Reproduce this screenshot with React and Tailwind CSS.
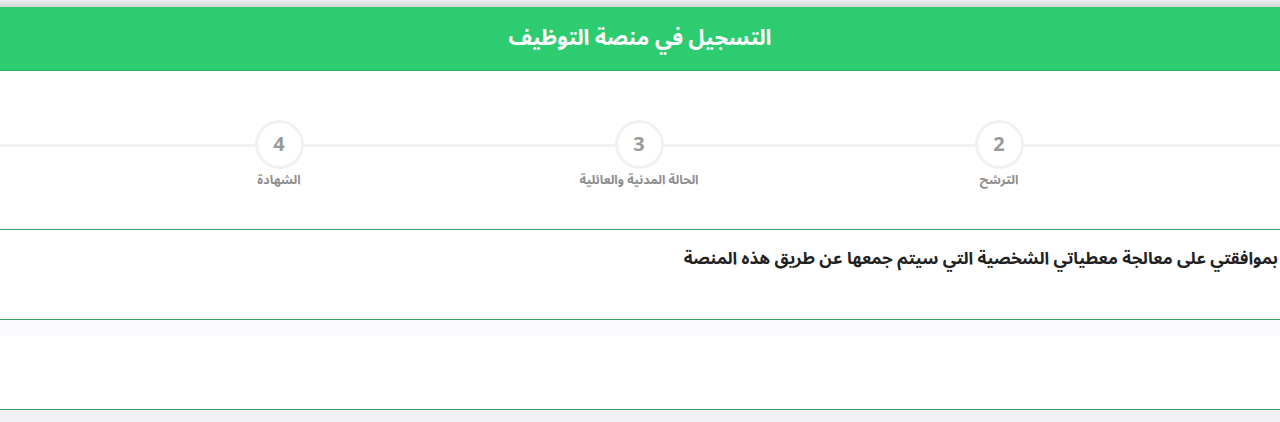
export default function App() {
  const steps = [
    { n: "4", label: "الشهادة" },
    { n: "3", label: "الحالة المدنية والعائلية" },
    { n: "2", label: "الترشح" },
  ];
  return (
    <div className="w-[1280px] h-[422px] overflow-hidden bg-white" style={{ fontFamily: '"Noto Sans Arabic","DejaVu Sans","Noto Sans",sans-serif' }}>
      <div className="h-[7px] bg-gradient-to-b from-[#ececec] to-[#d6d6d6]" />
      <div className="h-[63px] bg-[#2ecc71] flex items-center justify-center">
        <h1 dir="rtl" className="text-white font-bold text-[21.5px] leading-none">التسجيل في منصة التوظيف</h1>
      </div>
      <div className="h-px bg-[#27ae60]" />
      <div className="relative h-[158px]">
        <div className="absolute left-0 right-0 top-[73px] h-[3px] bg-[#f1f1f1]" />
        <div className="relative flex pl-[99px] pt-[49px]">
          {steps.map((s) => (
            <div key={s.n} className="w-[360px] flex flex-col items-center">
              <div className="w-[49px] h-[49px] rounded-full border-[3px] border-[#f1f1f1] bg-white flex items-center justify-center text-[20px] font-bold text-[#9a9a9a]">
                {s.n}
              </div>
              <div dir="rtl" className="mt-[5px] text-[12.5px] font-bold text-[#8d8d8d] leading-none">{s.label}</div>
            </div>
          ))}
        </div>
      </div>
      <div className="h-px bg-[#3f9f6c]" />
      <div className="h-[89px] pt-[21px] pr-[2px]" dir="rtl">
        <p className="text-[17px] font-bold text-[#222] leading-none">بموافقتي على معالجة معطياتي الشخصية التي سيتم جمعها عن طريق هذه المنصة</p>
      </div>
      <div className="h-px bg-[#3f9f6c]" />
      <div className="h-[16px] bg-[#faf9fc]" />
      <div className="h-[73px] bg-white" />
      <div className="h-px bg-[#3f9f6c]" />
      <div className="h-[20px] bg-[#f0f0f5]" />
    </div>
  );
}
